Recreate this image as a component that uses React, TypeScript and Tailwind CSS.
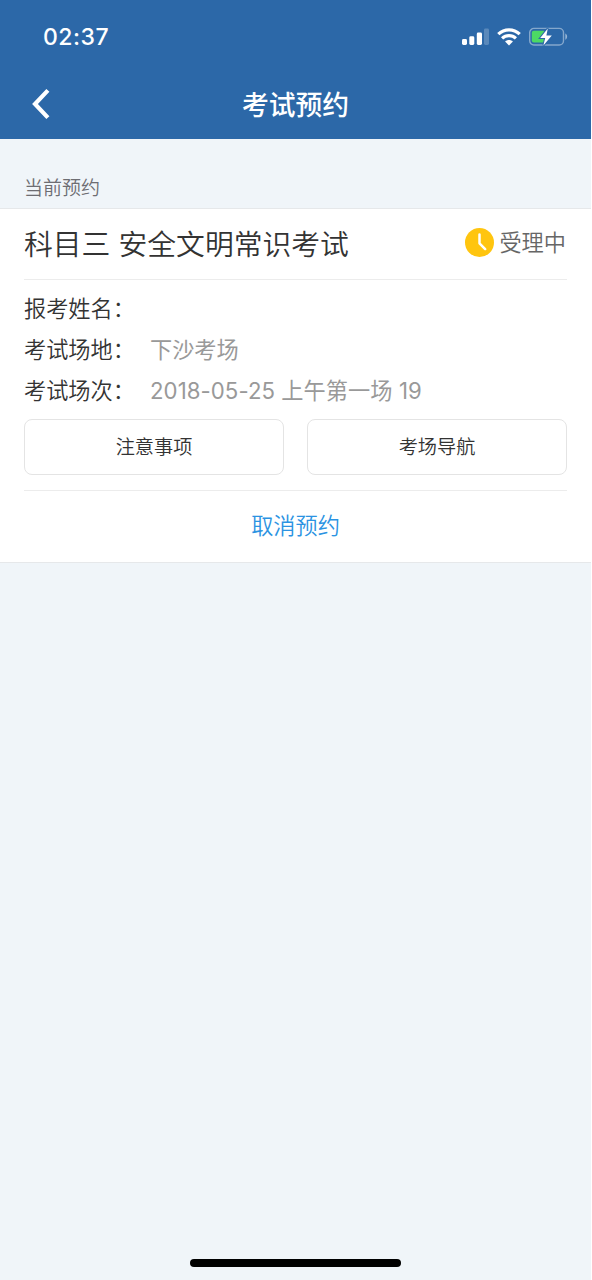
import React from "react";

interface RowProps {
  label: string;
  value?: React.ReactNode;
}

const SignalIcon = () => (
  <svg width="27" height="18" viewBox="0 0 27 18" fill="#fff">
    <rect x="0" y="11" width="5" height="6" rx="1.4" />
    <rect x="7.3" y="8.3" width="5" height="8.7" rx="1.4" />
    <rect x="14.8" y="4.5" width="5.2" height="12.5" rx="1.4" />
    <rect x="22" y="0.5" width="5" height="16.5" rx="1.4" opacity="0.22" />
  </svg>
);

const WifiIcon = () => (
  <svg width="24" height="18" viewBox="0 0 24 18" fill="none" stroke="#fff" strokeWidth="3.2">
    <path d="M1.3 6.2C7.3.3 16.7.3 22.7 6.2" />
    <path d="M5.1 10.3C9 6.6 15 6.6 18.9 10.3" />
    <path d="M8.1 13.6C10.2 11.6 13.8 11.6 15.9 13.6L12 17.6Z" fill="#fff" stroke="none" />
  </svg>
);

const BatteryIcon = () => (
  <svg width="40" height="20" viewBox="0 0 40 20" fill="none">
    <rect x="0.7" y="1.4" width="33.8" height="16.6" rx="4.2" stroke="#fff" strokeOpacity="0.42" strokeWidth="1.4" />
    <path d="M36.3 6.6C38.7 7.5 38.7 11.9 36.3 12.8Z" fill="#fff" fillOpacity="0.5" />
    <rect x="2.8" y="3.8" width="13.5" height="11.8" rx="2" fill="#4cd964" />
    <path d="M18.8 1.4L11.2 10.9H16.2L14.4 18.4L22.8 8.4H17.4Z" fill="#fff" stroke="#2c68a8" strokeWidth="2" paintOrder="stroke" />
  </svg>
);

const ClockIcon = () => (
  <svg width="29" height="29" viewBox="0 0 28 28" fill="none">
    <circle cx="14" cy="14" r="14" fill="#ffc50f" />
    <path d="M14 6.3V14.8L19.5 20.3" stroke="#fff" strokeWidth="2.4" strokeLinecap="round" strokeLinejoin="round" />
  </svg>
);

const InfoRow = ({ label, value }: RowProps) => (
  <div className="flex h-[41px] items-center text-[22.2px]">
    <span className="w-[126px] shrink-0 text-[#333333]">{label}：</span>
    <span className="font-normal whitespace-nowrap text-[#999999]">{value}</span>
  </div>
);

const OutlineButton = ({ children }: { children: React.ReactNode }) => (
  <button className="flex h-14 flex-1 items-center justify-center rounded-lg border border-[#e4e4e4] text-[19.2px] text-[#333333]">
    {children}
  </button>
);

export default function App() {
  return (
    <div className="h-[1280px] w-[592px] bg-white font-['Inter','Noto_Sans_CJK_SC',sans-serif] font-[350]">
      <div className="flex h-full w-[591px] flex-col bg-[#f0f5f9]">
        <header className="h-[139px] shrink-0 bg-[#2c68a8] text-white">
          <div className="flex h-[73px] items-center justify-between pl-[43px] pr-[22px]">
            <span className="pt-0.5 text-[23px] font-medium tracking-[0.5px]">02:37</span>
            <div className="flex items-center">
              <SignalIcon />
              <span className="ml-2"><WifiIcon /></span>
              <span className="ml-2"><BatteryIcon /></span>
            </div>
          </div>
          <div className="grid h-[62px] grid-cols-[80px_1fr_80px] items-center">
            <button aria-label="返回" className="pl-8">
              <svg width="20" height="32" viewBox="0 0 20 32" fill="none" stroke="#fff" strokeWidth="4.2">
                <path d="M15.9 2.4L3 16L15.9 29.6" />
              </svg>
            </button>
            <h1 className="pt-0.5 text-center text-[26.8px] font-medium">考试预约</h1>
          </div>
        </header>

        <div className="flex h-[69px] shrink-0 items-end px-6 pb-[5px] text-[19px] text-[#6d6d72]">当前预约</div>

        <main className="border-y border-[#e6e8ea] bg-white px-6">
          <div className="flex h-[71px] items-center justify-between border-b border-[#ececec]">
            <h2 className="pt-0.5 text-[28.8px] text-[#333333]">科目三 安全文明常识考试</h2>
            <div className="flex items-center gap-[5px] pr-px pb-0.5 text-[22.2px] text-[#666666]">
              <ClockIcon />
              <span>受理中</span>
            </div>
          </div>
          <div className="pt-2">
            <InfoRow label="报考姓名" />
            <InfoRow label="考试场地" value="下沙考场" />
            <InfoRow label="考试场次" value={<span className="tracking-[0.06px]">2018-05-25 上午第一场 19</span>} />
          </div>
          <div className="flex gap-[23px] border-b border-[#ececec] pt-2 pb-[15px]">
            <OutlineButton>注意事项</OutlineButton>
            <OutlineButton>考场导航</OutlineButton>
          </div>
          <button className="flex h-[71px] w-full items-center justify-center pb-0.5 text-[22.2px] text-[#2b93e2]">取消预约</button>
        </main>

        <div className="mx-auto mt-auto mb-[13px] h-2 w-[211px] rounded-full bg-black" />
      </div>
    </div>
  );
}
